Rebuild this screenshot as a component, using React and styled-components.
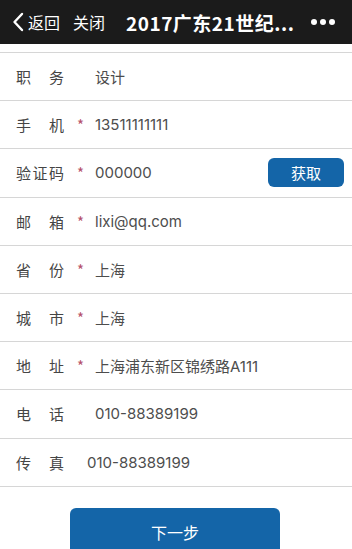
import styled, { createGlobalStyle } from "styled-components";

const GlobalStyle = createGlobalStyle`
  * { box-sizing: border-box; }
  html, body {
    margin: 0;
    padding: 0;
    background: #ffffff;
    font-family: "Noto Sans CJK SC", "Noto Sans", sans-serif;
  }
`;

const fields = [
  { label: "职务", value: "设计" },
  { label: "手机", value: "13511111111", required: true },
  { label: "验证码", value: "000000", required: true, action: "获取" },
  { label: "邮箱", value: "lixi@qq.com", required: true },
  { label: "省份", value: "上海", required: true },
  { label: "城市", value: "上海", required: true },
  { label: "地址", value: "上海浦东新区锦绣路A111", required: true },
  { label: "电话", value: "010-88389199" },
  { label: "传真", value: "010-88389199", $shift: true },
];

export default function App() {
  return (
    <>
      <GlobalStyle />
      <Page>
        <TopBar>
          <BackLink>
            <svg width="12" height="20" viewBox="0 0 12 20">
              <path d="M10 2 L2.5 10 L10 18" fill="none" stroke="#fff" strokeWidth="2.4" strokeLinecap="round" strokeLinejoin="round" />
            </svg>
            <span>返回</span>
          </BackLink>
          <CloseLink>关闭</CloseLink>
          <Title>2017广东21世纪...</Title>
          <More>
            <i /><i /><i />
          </More>
        </TopBar>

        <Form>
          {fields.map((f) => (
            <Row key={f.label}>
              <Label>
                {f.label.split("").map((c, i) => (
                  <span key={i}>{c}</span>
                ))}
              </Label>
              <Star>{f.required ? "*" : ""}</Star>
              <Value $shift={f.$shift}>{f.value}</Value>
              {f.action && <GetButton>{f.action}</GetButton>}
            </Row>
          ))}
        </Form>

        <Footer>
          <NextButton>下一步</NextButton>
        </Footer>
      </Page>
    </>
  );
}

const Page = styled.div`
  width: 352px;
  height: 549px;
  overflow: hidden;
  display: flex;
  flex-direction: column;
`;

const TopBar = styled.div`
  height: 44px;
  background: #1b1b1b;
  color: #fff;
  display: flex;
  align-items: center;
  padding: 0 0 0 12px;
  flex-shrink: 0;
`;

const BackLink = styled.div`
  display: flex;
  align-items: center;
  gap: 4px;
  font-size: 16px;
`;

const CloseLink = styled.div`
  font-size: 16px;
  margin-left: 13px;
`;

const Title = styled.div`
  font-size: 19px;
  font-weight: 700;
  margin-left: 21px;
  letter-spacing: 0.5px;
`;

const More = styled.div`
  display: flex;
  gap: 3px;
  margin-left: auto;
  margin-right: 17px;
  i {
    width: 6px;
    height: 6px;
    border-radius: 50%;
    background: #fff;
  }
`;

const Form = styled.div`
  margin-top: 8px;
  border-top: 1px solid #d6d6d6;
`;

const Row = styled.div`
  height: 48.2px;
  display: flex;
  align-items: center;
  padding: 0 8px 0 16px;
  border-bottom: 1px solid #d6d6d6;
  font-size: 15px;
`;

const Label = styled.div`
  width: 48px;
  display: flex;
  justify-content: space-between;
  color: #454545;
`;

const Star = styled.span`
  width: 18px;
  margin-left: 13px;
  color: #b5506a;
  font-size: 15px;
`;

const Value = styled.span`
  font-family: Inter, "Noto Sans CJK SC", sans-serif;
  color: #4d4d4d;
  margin-left: ${(props) => (props.$shift ? "-8px" : "0")};
`;

const GetButton = styled.button`
  margin-left: auto;
  width: 76px;
  height: 29px;
  border: none;
  border-radius: 6px;
  background: #1465a8;
  color: #fff;
  font-family: inherit;
  font-size: 15px;
`;

const Footer = styled.div`
  display: flex;
  justify-content: center;
  padding-top: 21px;
  padding-right: 2px;
`;

const NextButton = styled.button`
  width: 210px;
  height: 48px;
  border: none;
  border-radius: 6px;
  background: #1465a8;
  color: #fff;
  font-family: inherit;
  font-size: 16px;
`;
